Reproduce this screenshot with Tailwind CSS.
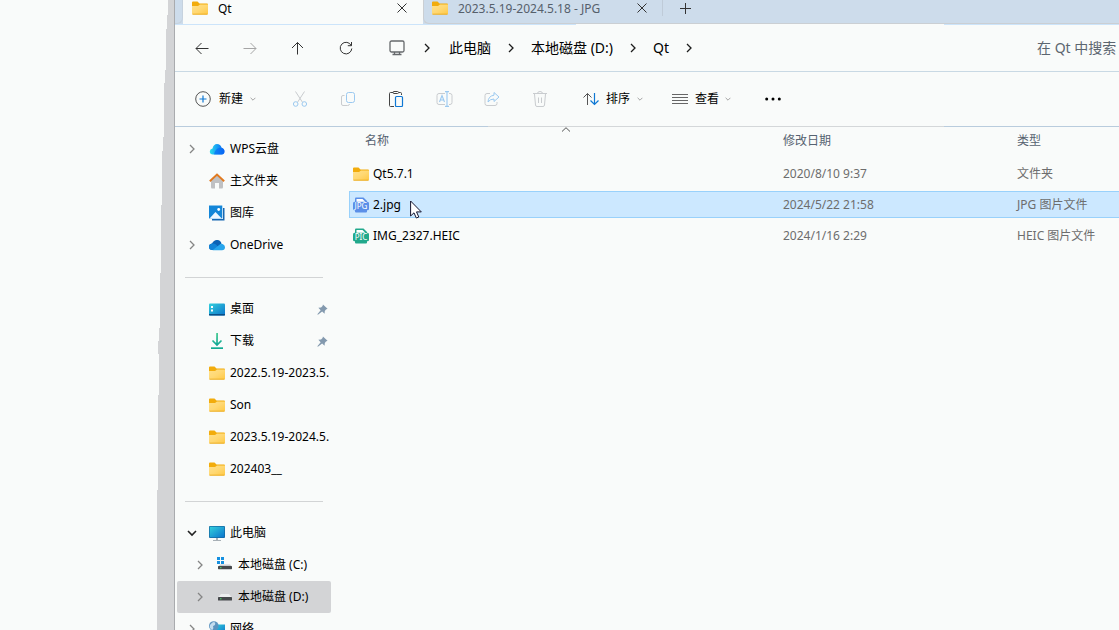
<!DOCTYPE html>
<html lang="zh-CN">
<head>
<meta charset="utf-8">
<title>Qt</title>
<script src="https://cdn.jsdelivr.net/npm/@tailwindcss/browser@4"></script>
</head>
<body class="flex h-screen overflow-hidden bg-[#f9fbfa] font-['Noto_Sans','Noto_Sans_CJK_SC',sans-serif] text-xs text-black">

<svg class="absolute size-0" aria-hidden="true">
  <defs>
    <linearGradient id="gFolder" x1="0" y1="0" x2="1" y2="1"><stop offset="0" stop-color="#ffe08a"/><stop offset=".5" stop-color="#ffd873"/><stop offset="1" stop-color="#ffc844"/></linearGradient>
    <linearGradient id="gWps" x1="0" y1="0" x2="1" y2="0"><stop offset="0" stop-color="#2be0e8"/><stop offset=".45" stop-color="#1ba4f4"/><stop offset="1" stop-color="#0a62f2"/></linearGradient>
    <linearGradient id="gScreen" x1="0" y1="0" x2="1" y2="1"><stop offset="0" stop-color="#33d0dc"/><stop offset="1" stop-color="#0c74cc"/></linearGradient>
    <linearGradient id="gDown" x1="0" y1="0" x2="0" y2="1"><stop offset="0" stop-color="#3fc98c"/><stop offset="1" stop-color="#0fa896"/></linearGradient>
  </defs>
  <symbol id="folder" viewBox="0 0 16 14"><path d="M0 1.500Q0 .5 1 .5H5.500L7.500 2.500H15Q16 2.500 16 3.500V8H0Z" fill="#f2ac0c"/><path d="M0 5H6L8 3.500H16V12.500Q16 13.500 15 13.500H1Q0 13.500 0 12.500Z" fill="url(#gFolder)"/><path d="M0.500 13.200H15.500" stroke="#eba91c" stroke-width=".9"/></symbol>
  <symbol id="right" viewBox="0 0 10 10"><path d="M3 1 7 5 3 9" fill="none" stroke="currentColor" stroke-width="1.300"/></symbol>
  <symbol id="down" viewBox="0 0 10 10"><path d="M1 3 5 7 9 3" fill="none" stroke="currentColor" stroke-width="1.600"/></symbol>
  <symbol id="close" viewBox="0 0 10 10"><path d="M.5.5 9.500 9.500M9.500.5.5 9.500" stroke="currentColor" fill="none"/></symbol>
  <symbol id="pin" viewBox="0 0 12 12"><path d="M6.500.5 11.500 5.300 9.800 6 8.500 7.600 8.300 10.500 5.600 8.300 1 11.800.4 11.200 4 6.800 1.500 4.200 4.400 3.700 6.100 2.200Z" fill="#8399ae"/></symbol>
</svg>

<!-- Edge of the background window -->
<div class="flex w-[175px] shrink-0 justify-end border-r border-[#a9abae]">
  <svg class="h-full w-5" viewBox="0 0 20 630" preserveAspectRatio="none" aria-hidden="true"><path d="M14 0V15H13V29H12V70H11V83H10V137H9V151H8V205H7V273H6V328H5V341H4V354H5V395H4V490H3V630H20V0Z" fill="#d3d4d6" shape-rendering="crispEdges"/></svg>
</div>

<div class="flex min-w-0 flex-1 flex-col">
  <!-- Tabs -->
  <div class="flex h-6 shrink-0 overflow-hidden bg-[#cddceb]">
    <div class="w-2 rounded-br-md border-r border-b border-[#c6d2de]"></div>
    <div class="flex w-60 items-start bg-[#f9fbfa] pl-[9px]">
      <svg class="mt-px h-[14px] w-4"><use href="#folder"/></svg>
      <span class="ml-[10px] leading-[18px]">Qt</span>
      <button class="mt-[3px] mr-4 ml-auto text-[#333]" aria-label="关闭标签页"><svg class="size-[10px]"><use href="#close"/></svg></button>
    </div>
    <div class="flex flex-1 items-start rounded-bl-md border-b border-l border-[#cbcfd3] pl-2">
      <svg class="mt-px h-[14px] w-4"><use href="#folder"/></svg>
      <span class="ml-[10px] w-[179px] leading-[18px] whitespace-nowrap text-[#56606b]">2023.5.19-2024.5.18 - JPG</span>
      <button class="mt-[3px] text-[#333]" aria-label="关闭标签页"><svg class="size-[10px]"><use href="#close"/></svg></button>
      <div class="ml-[15px] h-4 w-px bg-[#bfcbd8]"></div>
      <button class="mt-[3px] ml-[17px] text-[#333]" aria-label="新建标签页"><svg class="size-[11px]" viewBox="0 0 11 11"><path d="M5.500 0V11M0 5.500H11" stroke="currentColor"/></svg></button>
    </div>
  </div>
  <div class="h-px shrink-0 bg-[linear-gradient(90deg,#cce4fa_401px,#f9fbfa_401px,#f9fbfa_769px,#cce4fa_769px)]"></div>

  <!-- Navigation -->
  <nav class="flex h-[47px] shrink-0 items-center border-b border-[#c9d9e4] pl-[11px] text-sm text-[#1c1c1c]">
    <div class="flex gap-4">
      <button class="grid h-8 w-8 place-items-center" aria-label="后退"><svg class="size-[14px]" viewBox="0 0 14 14" fill="none" stroke="#333"><path d="M13.500 7.500H1M6.500 2 1 7.500 6.500 13"/></svg></button>
      <button class="grid h-8 w-8 place-items-center" aria-label="前进"><svg class="size-[14px]" viewBox="0 0 14 14" fill="none" stroke="#a5a5a5"><path d="M.5 7.500H13M7.500 2 13 7.500 7.500 13"/></svg></button>
      <button class="grid h-8 w-8 place-items-center" aria-label="向上"><svg class="size-[14px]" viewBox="0 0 14 14" fill="none" stroke="#333"><path d="M6.500 13.500V1.500M1 7 6.500 1.500 12 7"/></svg></button>
      <button class="grid h-8 w-8 place-items-center" aria-label="刷新"><svg class="size-[14px]" viewBox="0 0 14 14" fill="none" stroke="#333"><path d="M12.200 4.500A5.800 5.800 0 1 0 12.800 7.500M12.500 1V4.700H8.800"/></svg></button>
    </div>
    <div class="ml-[19px] grid w-8 place-items-center"><svg class="size-4" viewBox="0 0 16 16" fill="none" stroke="#66696c" stroke-width="1.300"><rect x="1" y="1" width="14" height="11" rx="1.500"/><path d="M5.500 12V15M10.500 12V15M3.500 14.500H12.500"/></svg></div>
    <svg class="mx-[9px] size-[10px]"><use href="#right"/></svg>
    <a href="#" class="px-2 text-black">此电脑</a>
    <svg class="mx-[7px] size-[10px]"><use href="#right"/></svg>
    <a href="#" class="px-2 whitespace-nowrap text-black">本地磁盘 (D:)</a>
    <svg class="mx-[7px] size-[10px]"><use href="#right"/></svg>
    <a href="#" class="px-2 text-black">Qt</a>
    <svg class="mx-[7px] size-[10px]"><use href="#right"/></svg>
    <input type="text" aria-label="搜索" placeholder="在 Qt 中搜索" class="ml-auto w-[82px] bg-transparent text-sm outline-none placeholder:text-[#5c6670]">
  </nav>

  <!-- Commands -->
  <div class="flex h-[54px] shrink-0 items-center pl-5">
    <button class="flex items-center">
      <svg class="size-4" viewBox="0 0 16 16" fill="none"><circle cx="8" cy="8" r="7.300" stroke="#555"/><path d="M8 4.500V11.500M4.500 8H11.500" stroke="#0f78d4" stroke-width="1.200"/></svg>
      <span class="ml-2">新建</span>
      <svg class="ml-[7px] size-[6px] text-[#a0a0a0]"><use href="#down"/></svg>
    </button>
    <div class="ml-7 flex gap-4">
      <button class="grid size-8 place-items-center" aria-label="剪切"><svg class="size-4" viewBox="0 0 16 16" fill="none"><path d="M3.500.5 10.300 11M12.500.5 5.700 11" stroke="#c9cccf"/><circle cx="3.700" cy="13" r="2.300" stroke="#9bc9f0"/><circle cx="12.300" cy="13" r="2.300" stroke="#9bc9f0"/></svg></button>
      <button class="grid size-8 place-items-center" aria-label="复制"><svg class="size-4" viewBox="0 0 16 16" fill="none"><path d="M4.500 4.500H3Q1.500 4.500 1.500 6V13Q1.500 14.500 3 14.500H7.500Q9.500 14.500 9.500 13" stroke="#c9cccf"/><rect x="6.500" y="1.500" width="8" height="10" rx="2" stroke="#9bc9f0"/></svg></button>
      <button class="grid size-8 place-items-center" aria-label="粘贴"><svg class="size-4" viewBox="0 0 16 16" fill="none"><path d="M5 1.500H2.500Q1.500 1.500 1.500 2.500V14.500Q1.500 15.500 2.500 15.500H6M11 1.500H12.500Q13.500 1.500 13.500 2.500V4" stroke="#444"/><rect x="5" y=".5" width="5.500" height="2" rx="1" stroke="#444"/><rect x="7.500" y="5.500" width="7" height="10" rx="1" stroke="#0f78d4" stroke-width="1.200"/></svg></button>
      <button class="grid size-8 place-items-center" aria-label="重命名"><svg class="h-4 w-[17px]" viewBox="0 0 17 16" fill="none"><path d="M9 2.500H3Q1 2.500 1 4.500V11.500Q1 13.500 3 13.500H9M13 2.500H14Q16 2.500 16 4.500V11.500Q16 13.500 14 13.500H13" stroke="#c9cccf"/><path d="M3.500 11 6 4.500 8.500 11M4.300 9H7.700M9 .6H13M11 .6V15.400M9 15.400H13" stroke="#9bc9f0" stroke-width="1.100"/></svg></button>
      <button class="grid size-8 place-items-center" aria-label="共享"><svg class="size-4" viewBox="0 0 16 16" fill="none"><path d="M6 2.500H3Q1 2.500 1 4.500V12.500Q1 14.500 3 14.500H11Q13 14.500 13 12.500V11" stroke="#c9cccf"/><path d="M10 1.500 15 6 10 10.500V8Q6 8 4 11Q4.300 5 10 4.200Z" stroke="#9bc9f0" stroke-linejoin="round"/></svg></button>
      <button class="grid size-8 place-items-center" aria-label="删除"><svg class="size-4" viewBox="0 0 16 16" fill="none" stroke="#c9cccf"><path d="M1 2.500H15M5.500 2.500Q5.500 .5 8 .5T10.500 2.500M2.500 3 3.500 14Q3.600 15.500 5 15.500H11Q12.400 15.500 12.500 14L13.500 3M6.500 6.500V12M9.500 6.500V12"/></svg></button>
    </div>
    <button class="ml-[27px] flex items-center">
      <svg class="h-[14px] w-[17px]" viewBox="0 0 17 14" fill="none"><path d="M4.500 13V1.500M.5 5.500 4.500 1.500 8.500 5.500" stroke="#555"/><path d="M11.500 1V12.500M7.500 8.500 11.500 12.500 15.500 8.500" stroke="#0f78d4" stroke-width="1.200"/></svg>
      <span class="ml-[6px]">排序</span>
      <svg class="ml-[7px] size-[6px] text-[#a0a0a0]"><use href="#down"/></svg>
    </button>
    <button class="ml-[29px] flex items-center">
      <svg class="h-3 w-4" viewBox="0 0 16 12" stroke="#666" shape-rendering="crispEdges"><path d="M0 1.500H16M0 4.500H16M0 7.500H16M0 10.500H16"/></svg>
      <span class="ml-[7px]">查看</span>
      <svg class="ml-[6px] size-[6px] text-[#a0a0a0]"><use href="#down"/></svg>
    </button>
    <button class="ml-[34px]" aria-label="更多"><svg class="h-1 w-4" viewBox="0 0 16 4"><circle cx="1.700" cy="2" r="1.500"/><circle cx="8" cy="2" r="1.500"/><circle cx="14.300" cy="2" r="1.500"/></svg></button>
  </div>
  <div class="h-px shrink-0 bg-[linear-gradient(90deg,#b9ccdd_313px,#d4d7d9_313px,#d4d7d9_769px,#b9ccdd_769px)]"></div>

  <div class="flex min-h-0 flex-1">
    <!-- Sidebar -->
    <aside class="ml-[2px] w-[154px] shrink-0 overflow-hidden pt-[6px] whitespace-nowrap">
      <a href="#" class="flex h-8 items-center pl-[10px]"><svg class="mr-3 size-[10px] text-[#858585]"><use href="#right"/></svg>
        <svg class="mr-[5px] size-4" viewBox="0 0 16 16"><path d="M4 13.500Q.8 13.500.8 10.500Q.8 8 3.500 7.500Q4.500 3 8 3Q11.500 3 12.500 6.500Q15.500 7.500 15.500 10.500T12.500 13.500Z" fill="url(#gWps)"/><path d="M5 13.500Q6 8 10 7Q14 6.300 15.300 9.500Q15.800 13.500 12.500 13.500Z" fill="#0869f4" opacity=".65"/></svg>WPS云盘</a>
      <a href="#" class="flex h-8 items-center pl-8">
        <svg class="mr-[5px] size-4" viewBox="0 0 16 16"><path d="M2 7 8 2 14 7V14Q14 15.500 13 15.500H10V10H6V15.500H3Q2 15.500 2 14Z" fill="#c0c1c3"/><path d="M.8 8.200 8 1.500 15.200 8.200" fill="none" stroke="#e17a20" stroke-width="1.900"/></svg>主文件夹</a>
      <a href="#" class="flex h-8 items-center pl-8">
        <svg class="mr-[5px] size-4" viewBox="0 0 16 16"><path d="M3 3H15.500V15.500H3Z" fill="#1667b2"/><path d="M0 .5H14V14H0Z" fill="#fff"/><path d="M0 .5H13.300V13.500H0Z" fill="#1486d8"/><path d="M.5 13.500 6.500 7 12.800 13.500Z" fill="#eef7ff"/><circle cx="9.700" cy="4.500" r="1.400" fill="#fff"/></svg>图库</a>
      <a href="#" class="flex h-8 items-center pl-[10px]"><svg class="mr-3 size-[10px] text-[#858585]"><use href="#right"/></svg>
        <svg class="mr-[5px] size-4" viewBox="0 0 16 16"><path d="M3.500 13Q0 13 0 9.800Q0 7 3 6.500Q5 2.500 8.500 3Q11.500 3.300 12.500 6.500L8 11Z" fill="#0b62b5"/><path d="M3.500 13Q0 13 0 9.800Q0 7 3 6.500Q5 6 7 7.500L12 13Z" fill="#1283d6"/><path d="M3.500 13.200 9.500 8.500Q12 6 14 7.200Q16 8 16 10.300Q16 13.200 13 13.200Z" fill="#27a5ec"/></svg>OneDrive</a>
      <div class="flex h-8 items-center px-2"><hr class="w-full border-[#d2d4d5]"></div>
      <a href="#" class="flex h-8 items-center pr-[3px] pl-8">
        <svg class="mr-[5px] size-4" viewBox="0 0 16 16"><rect y="2.500" width="16" height="12" rx="1" fill="url(#gScreen)"/><path d="M0 13H16V14Q16 14.500 15 14.500H1Q0 14.500 0 14Z" fill="#0b4f87"/><path d="M2 5H4V7H2ZM2 8.500H4V10.500H2Z" fill="#fff"/></svg>桌面
        <svg class="ml-auto size-[11px]"><use href="#pin"/></svg></a>
      <a href="#" class="flex h-8 items-center pr-[3px] pl-8">
        <svg class="mr-[5px] size-4" viewBox="0 0 16 16"><path d="M8.100 0 8 12M3.500 7.500 8 12 12.500 7.500" fill="none" stroke="url(#gDown)" stroke-width="1.700"/><path d="M2 14.300H14V16H2Z" fill="#12ab92"/></svg>下载
        <svg class="ml-auto size-[11px]"><use href="#pin"/></svg></a>
      <a href="#" class="flex h-8 items-center pl-8"><svg class="mr-[5px] h-[14px] w-4 shrink-0"><use href="#folder"/></svg>2022.5.19-2023.5.</a>
      <a href="#" class="flex h-8 items-center pl-8"><svg class="mr-[5px] h-[14px] w-4 shrink-0"><use href="#folder"/></svg>Son</a>
      <a href="#" class="flex h-8 items-center pl-8"><svg class="mr-[5px] h-[14px] w-4 shrink-0"><use href="#folder"/></svg>2023.5.19-2024.5.</a>
      <a href="#" class="flex h-8 items-center pl-8"><svg class="mr-[5px] h-[14px] w-4 shrink-0"><use href="#folder"/></svg>202403__</a>
      <div class="flex h-8 items-center px-2"><hr class="w-full border-[#d2d4d5]"></div>
      <a href="#" class="flex h-8 items-center pl-[10px]"><svg class="mr-3 size-[10px] text-[#222]"><use href="#down"/></svg>
        <svg class="mr-[5px] size-4" viewBox="0 0 16 16"><rect y="1" width="16" height="12" rx="1" fill="#14679f"/><rect x=".7" y="1.700" width="14.600" height="10.600" fill="url(#gScreen)"/><path d="M7 13H9V15H12V16H4V15H7Z" fill="#a8b0b6"/></svg>此电脑</a>
      <a href="#" class="flex h-8 items-center pl-[18px]"><svg class="mr-3 size-[10px] text-[#858585]"><use href="#right"/></svg>
        <svg class="mr-[5px] size-4" viewBox="0 0 16 16"><path d="M0 0H3V3H0ZM4 0H7V3H4ZM0 4H3V7H0ZM4 4H7V7H4Z" fill="#1590e0"/><path d="M3 7.500H13L15 9.500H1.500Z" fill="#c9cccf"/><rect x="1" y="9" width="14" height="3.200" rx=".6" fill="#46494c"/><rect x="3" y="10.200" width="1.500" height="1" fill="#4fe06a"/></svg>本地磁盘 (C:)</a>
      <a href="#" class="flex h-8 items-center rounded-[2px] bg-[#d3d4d6] pl-[18px]" aria-current="page"><svg class="mr-3 size-[10px] text-[#858585]"><use href="#right"/></svg>
        <svg class="mr-[5px] size-4" viewBox="0 0 16 16"><path d="M4 5H12L15 8.500H1Z" fill="#eceeef"/><rect x="1" y="8" width="14" height="3.500" rx=".6" fill="#46494c"/><rect x="3" y="9.300" width="1.500" height="1" fill="#4fe06a"/></svg>本地磁盘 (D:)</a>
      <a href="#" class="flex h-8 items-center pl-[10px]"><svg class="mr-3 size-[10px] text-[#858585]"><use href="#right"/></svg>
        <svg class="mr-[5px] size-4" viewBox="0 0 16 16"><rect x="5" y="3.500" width="11" height="9.500" fill="url(#gScreen)"/><circle cx="4.800" cy="5" r="4.800" fill="#5b93bf"/><path d="M1 4Q4 0 6 1.500 7 4 4 5 5 8 3 9 0 7 1 4Z" fill="#c4dcee"/></svg>网络</a>
    </aside>

    <!-- Files -->
    <main class="ml-[18px] min-w-0 flex-1">
      <table class="w-full table-fixed border-separate border-spacing-x-0 border-spacing-y-1 text-left whitespace-nowrap">
        <thead class="text-[#566270]">
          <tr>
            <th class="relative h-[25px] w-[434px] pb-[5px] pl-4 font-normal">名称
              <svg class="absolute -top-1 left-1/2 h-[5px] w-[9px] -translate-x-1/2" viewBox="0 0 9 5"><path d="M.5 4.500 4.500.7 8.500 4.500" fill="none" stroke="#555"/></svg></th>
            <th class="w-[234px] pb-[5px] font-normal">修改日期</th>
            <th class="pb-[5px] font-normal">类型</th>
          </tr>
        </thead>
        <tbody class="text-[#6d6d6d]">
          <tr>
            <td class="h-[27px] pl-1"><div class="flex items-center gap-1 text-black"><svg class="h-[14px] w-4"><use href="#folder"/></svg>Qt5.7.1</div></td>
            <td>2020/8/10 9:37</td>
            <td>文件夹</td>
          </tr>
          <tr class="bg-[#cce8ff]" aria-selected="true">
            <td class="relative h-[27px] border-y border-l border-[#99d1fb] pl-[3px]">
              <div class="flex items-center gap-1 text-black">
                <svg class="size-4" viewBox="0 0 16 16"><path d="M2 5V1.500Q2 .5 3 .5H10.500L14 4V14.500Q14 15.500 13 15.500H3Q2 15.500 2 14.500Z" fill="#5b8fe8"/><path d="M3.500 5V2H9.500L12.500 5Z" fill="#fff"/><rect y="4.700" width="16" height="8.600" rx="1.500" fill="#5b8fe8"/><text x="8" y="12" text-anchor="middle" font-size="8" fill="#fff">JPG</text></svg>2.jpg</div>
              <svg class="absolute top-2 left-[60px] h-[19px] w-3" viewBox="0 0 12 19"><path d="M.6 1V16L4 12.800 6.300 18 8.800 17 6.500 11.900H11.300Z" fill="#fff" stroke="#14142e" stroke-width="1"/></svg>
            </td>
            <td class="border-y border-[#99d1fb]">2024/5/22 21:58</td>
            <td class="border-y border-[#99d1fb]">JPG 图片文件</td>
          </tr>
          <tr>
            <td class="h-[27px] pl-1"><div class="flex items-center gap-1 text-black"><svg class="size-4" viewBox="0 0 16 16"><path d="M2 5V1.500Q2 .5 3 .5H10.500L14 4V14.500Q14 15.500 13 15.500H3Q2 15.500 2 14.500Z" fill="#22a98c"/><path d="M3.500 5V2H9.500L12.500 5Z" fill="#fff"/><rect y="4.700" width="16" height="8.600" rx="1.500" fill="#22a98c"/><text x="8" y="12" text-anchor="middle" font-size="8" fill="#fff">PIC</text></svg>IMG_2327.HEIC</div></td>
            <td>2024/1/16 2:29</td>
            <td>HEIC 图片文件</td>
          </tr>
        </tbody>
      </table>
    </main>
  </div>
</div>
</body>
</html>
